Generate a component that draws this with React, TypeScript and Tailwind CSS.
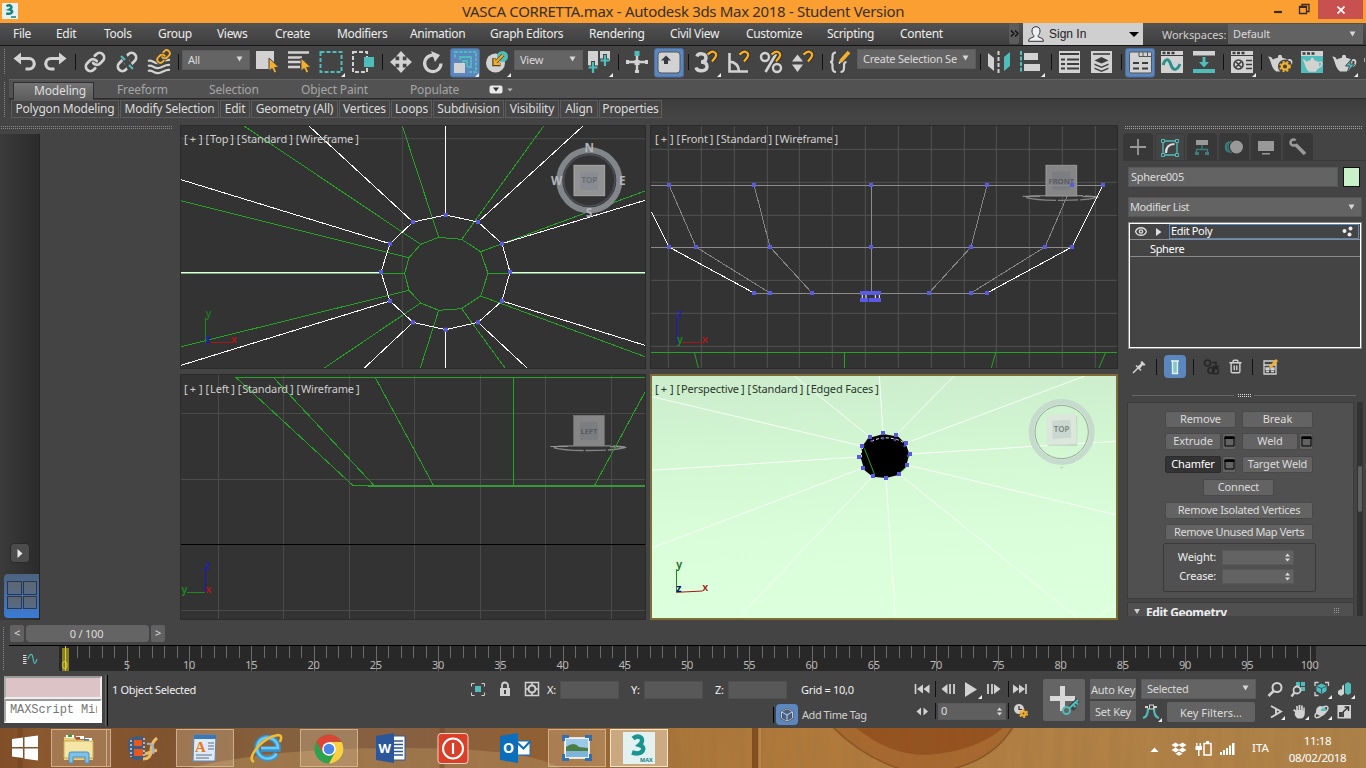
import React from "react";
import { Link, Trash2, Eye } from "lucide-react";

const L = "#d2d2d2";
const T = "#4fbdb9";
const O = "#f4b02c";
const BLUE = "#5b86be";

type Kids = { children?: React.ReactNode };

/* ---------- small building blocks ---------- */

function Slot({ children, flyout, active }: Kids & { flyout?: boolean; active?: boolean }) {
  return (
    <svg className="h-8 w-8 shrink-0" viewBox="0 0 32 32" fill="none">
      {active && <rect x="1.5" y="2.5" width="29" height="28.5" rx="2.5" fill={BLUE} stroke="#4a6f9f" />}
      {children}
      {flyout && <path d="M30 27v4h-4z" fill="#eee" />}
    </svg>
  );
}

function Sep() {
  return (
    <div className="flex h-8 w-1.5 shrink-0 items-center justify-center">
      <div className="h-4 w-px bg-[#111]" />
    </div>
  );
}

function Caret({ className = "" }: { className?: string }) {
  return (
    <svg className={"h-[6px] w-[7px] shrink-0 " + className} viewBox="0 0 7 6">
      <path d="M0.500 0.500h6L3.5 5.500z" fill="#d6d6d6" />
    </svg>
  );
}

function Drop({ label, className }: { label: string; className: string }) {
  return (
    <div className={"flex shrink-0 items-center justify-between border border-[#5b5b5b] bg-[#646464] pl-[5px] pr-[6px] text-[11px] tracking-[-0.25px] text-[#dadada] " + className}>
      <span>{label}</span>
      <Caret className="-mt-0.5" />
    </div>
  );
}

function Magnet({ x = 0, y = 0 }: { x?: number; y?: number }) {
  return (
    <g transform={`translate(${x} ${y})`}>
      <path d="M0 4L3.500 1.500C6.500 0 10 3.500 8 6.500L4.500 11" stroke="#3a3222" strokeWidth="4.200" />
      <path d="M0 4L3.500 1.500C6.500 0 10 3.500 8 6.500L4.500 11" stroke={O} strokeWidth="2.200" />
    </g>
  );
}

function Teapot() {
  return (
    <g>
      <path d="M4 10.500l3 .5 3.500 4.500-1 6C6.500 18.500 7 14 4 10.500z" fill={L} />
      <path d="M14 10.500a2 1.800 0 0 1 4 0v1.200c4 .6 6.500 2.300 6.500 4.800 0 4-2 7-4.500 9h-8c-2.500-2-4.500-5-4.500-9 0-2.500 2.500-4.200 6.500-4.800z" fill={L} />
      <path d="M23.500 14.500q4-1.500 4 1.500 0 3.500-5 5" stroke={L} strokeWidth="1.800" fill="none" />
    </g>
  );
}

function Gear({ cx, cy, r }: { cx: number; cy: number; r: number }) {
  return (
    <g>
      <circle cx={cx} cy={cy} r={r} fill="none" stroke={O} strokeWidth="2.200" />
      <circle cx={cx} cy={cy} r={r + 1.7} fill="none" stroke={O} strokeWidth="1.800" strokeDasharray="2 2" />
    </g>
  );
}

/* ---------- title and menus ---------- */

function TitleBar() {
  return (
    <div className="flex h-[23px] items-start bg-[#fb9f33]">
      <svg className="ml-[2px] mt-[3px] h-4 w-4" viewBox="0 0 16 16" fill="none">
        <rect width="16" height="16" fill="#e4f1f0" />
        <path d="M4.500 3.200c4-2.400 7 1.300 3 3.300 4.500.8 3 5.500-3.300 4" stroke="#14807f" strokeWidth="2.500" />
        <path d="M9 14h5" stroke="#14807f" strokeWidth="1.500" />
      </svg>
      <div className="ml-[444px] w-[445px] whitespace-nowrap text-[15px] leading-[23px] tracking-[-0.32px] text-[#38301f]">
        VASCA CORRETTA.max - Autodesk 3ds Max 2018 - Student Version
      </div>
      <svg className="ml-[365px] h-5 w-[46px]" viewBox="1272 0 46 20" fill="none">
        <path d="M1274 12h8" stroke="#3a2a14" strokeWidth="2.200" />
        <path d="M1299.500 6.500h7v7h-7zM1302 6V4.500h7v7h-2" stroke="#3a2a14" strokeWidth="1.300" />
        <path d="M1299 7h8" stroke="#3a2a14" strokeWidth="2" />
      </svg>
      <div className="flex h-[19px] w-[45px] items-center justify-center bg-[#c8504f]">
        <svg className="h-2 w-2" viewBox="0 0 8 8">
          <path d="M0.500 0.500l7 7M7.500 0.500l-7 7" stroke="#fff" strokeWidth="1.700" />
        </svg>
      </div>
    </div>
  );
}

const menus = [
  ["File", "w-[43px]"],
  ["Edit", "w-[48px]"],
  ["Tools", "w-[54px]"],
  ["Group", "w-[59px]"],
  ["Views", "w-[58px]"],
  ["Create", "w-[62px]"],
  ["Modifiers", "w-[73px]"],
  ["Animation", "w-[80px]"],
  ["Graph Editors", "w-[99px]"],
  ["Rendering", "w-[81px]"],
  ["Civil View", "w-[76px]"],
  ["Customize", "w-[81px]"],
  ["Scripting", "w-[73px]"],
  ["Content", "w-[109px]"],
];

function MenuBar() {
  return (
    <div className="flex h-[23px] items-start border-b border-[#151515] bg-linear-to-b from-[#525252] to-[#3e3e3e] pl-[13px] text-[12px] tracking-[-0.33px] text-[#ededed]">
      {menus.map(([m, w]) => (
        <span key={m} className={"shrink-0 leading-[21px] " + w}>{m}</span>
      ))}
      <div className="flex h-[21px] w-[10px] items-center justify-center rounded-xs bg-[#5c5c5c]">
        <svg className="h-[7px] w-[9px]" viewBox="0 0 9 7" fill="none" stroke="#111" strokeWidth="1.300">
          <path d="M1 .5l3 3-3 3M5 .5l3 3-3 3" />
        </svg>
      </div>
      <div className="ml-1 flex h-[22px] w-[120px] shrink-0 items-center bg-[#cfcfcf] pl-[5px] pr-1 font-['Liberation_Sans',sans-serif] text-[12px] tracking-normal text-[#222]">
        <svg className="h-4 w-4" viewBox="0 0 16 16">
          <path d="M8 .7c3 0 4 2 4 4.300 0 2-.8 3.700-1.800 4.500v1.300l4.500 2 .8 2.500H.5l.8-2.500 4.500-2V9.500C4.800 8.700 4 7 4 5 4 2.700 5 .7 8 .7z" fill="#eef0f5" stroke="#333" strokeWidth="1" />
        </svg>
        <span className="ml-[5px] flex-1">Sign In</span>
        <svg className="h-[5px] w-[10px]" viewBox="0 0 10 5"><path d="M0 0h10L5 5z" fill="#000" /></svg>
      </div>
      <span className="ml-[19px] w-[66px] shrink-0 text-[11px] leading-[23px] tracking-[-0.05px] text-[#d0d0d0]">Workspaces:</span>
      <div className="mt-px flex h-[20px] flex-1 items-center justify-between bg-[#626262] pl-[5px] pr-[7px] text-[11px] tracking-[-0.1px] text-[#dadada]">
        <span>Default</span>
        <Caret />
      </div>
      <div className="w-[3px]" />
    </div>
  );
}

/* ---------- main toolbar ---------- */

function Toolbar() {
  return (
    <div className="flex h-[33px] items-start overflow-hidden bg-[#444]">
      <div className="ml-[3px] mr-[2px] mt-[3px] h-[26px] w-[3px] bg-[conic-gradient(#8a8a8a_25%,transparent_0)] bg-[length:2px_2px]" />
      <Slot>
        <path d="M12 12.500H21a5 5 0 0 1 0 10.500H17.500" stroke={L} strokeWidth="3.200" />
        <path d="M5.500 12.500L13 6.500v12z" fill={L} />
      </Slot>
      <Slot>
        <path d="M20 12.500H11a5 5 0 0 0 0 10.500H14.500" stroke={L} strokeWidth="3.200" />
        <path d="M26.500 12.500L19 6.500v12z" fill={L} />
      </Slot>
      <Sep />
      <div className="w-px" />
      <Slot>
        <Link x={5} y={5} width={22} height={22} color={L} strokeWidth={3} />
      </Slot>
      <Slot>
        <Link x={5} y={5} width={22} height={22} color={L} strokeWidth={3} />
        <path d="M11 7L21 25" stroke="#444" strokeWidth="6" />
        <path d="M10 10l4 4M18 19l4 4" stroke={T} strokeWidth="2.200" />
      </Slot>
      <Slot>
        <path d="M5 15c4-2 6 3 11 2 4-1 7-4 11-3M5 20c4-2 6 3 11 2 4-1 7-4 11-3M5 25c4-2 6 3 11 2 4-1 7-4 11-3" stroke={L} strokeWidth="2.200" />
        <Link x={13} y={3} width={15} height={15} color="#444" strokeWidth={6} />
        <Link x={13} y={3} width={15} height={15} color={O} strokeWidth={3} />
      </Slot>
      <Sep />
      <div className="w-px" />
      <Drop label="All" className="mt-[4px] h-[20px] w-[68px]" />
      <Slot>
        <rect x="6" y="5" width="18" height="18" fill={L} />
        <path d="M19 12v13l3.200-2.500 2 4.500 2.500-1-2-4.500 4-.5z" fill={O} stroke="#444" />
      </Slot>
      <Slot>
        <path d="M6 6.500h21M6 11.500h14M6 16h17M6 21h12" stroke={L} strokeWidth="2.400" />
        <path d="M19 12v13l3.200-2.500 2 4.500 2.500-1-2-4.500 4-.5z" fill={O} stroke="#444" />
      </Slot>
      <div className="w-px" />
      <Slot flyout>
        <rect x="5.500" y="6" width="21" height="20" stroke={T} strokeWidth="2" strokeDasharray="4 2" />
      </Slot>
      <Slot>
        <rect x="6" y="6" width="14" height="20" stroke={L} strokeWidth="2" strokeDasharray="4 2" />
        <rect x="17" y="11" width="10" height="10" fill={T} />
      </Slot>
      <Sep />
      <Slot>
        <path d="M8 16H24M16 8V24" stroke={L} strokeWidth="3.600" />
        <path d="M16 5l5 5.500h-10zM16 27l5-5.500h-10zM5 16l5.500-5v10zM27 16l-5.500-5v10z" fill={L} />
      </Slot>
      <Slot>
        <path d="M19 9.800A8.200 8.200 0 1 0 24 17.500" stroke={L} strokeWidth="3.200" />
        <path d="M14 5l9 4-5 7z" fill={L} />
      </Slot>
      <Slot active>
        <rect x="6" y="6" width="21" height="20" stroke={T} strokeWidth="2" strokeDasharray="3 1.500" />
        <rect x="5" y="13" width="15" height="14" fill={BLUE} />
        <path d="M11 14v-3h11v10h-3M14 17v-2h4v6" stroke={T} strokeWidth="1.800" />
        <rect x="5" y="17" width="11" height="10" fill={L} />
        <path d="M30 27v4h-4z" fill="#eee" />
      </Slot>
      <Slot flyout>
        <circle cx="14.500" cy="17" r="9.500" fill={L} />
        <circle cx="21.500" cy="10.500" r="5.500" fill={T} />
        <path d="M22 9l-8 8M13 12v6.500h6.500" stroke="#5a4315" strokeWidth="3.500" />
        <path d="M22 9l-8 8M13.500 12.500v5.500h5.500" stroke={O} strokeWidth="2" />
      </Slot>
      <div className="w-px" />
      <Drop label="View" className="mt-[4px] h-[20px] w-[69px]" />
      <Slot flyout>
        <path d="M5 5h10v14l-5 4-5-4zM17 5h10v9l-5 4-5-4z" fill={L} />
        <path d="M10 15v13M5 21.500h9M22 8v13M17 14.500h9" stroke="#444" strokeWidth="4" />
        <path d="M10 16v11M5.500 21.500h9M22 9v11M17.500 14.500h9" stroke={T} strokeWidth="2.200" />
      </Slot>
      <Sep />
      <Slot>
        <path d="M16 9v18M5 16h22" stroke={L} strokeWidth="2.400" />
        <rect x="13.500" y="5" width="5" height="5" fill={T} />
        <path d="M13.500 14h5v5h-5zM5 14h3v4H5zM24 14h3v4h-3zM14 24h4v3h-4z" fill={L} />
      </Slot>
      <Slot active>
        <rect x="5" y="6" width="22" height="21" rx="3" fill={L} stroke="#555" />
        <path d="M13 9.500l5 5h-3v3.500h-4v-3.500H8z" fill="#3a3a3a" />
      </Slot>
      <Sep />
      <Slot flyout>
        <path d="M6 10.500C7 6.500 15.500 7 15 12c-.3 3-2.500 4-5 4 3 0 6 1 6 4.500 0 5-9.500 6-11 1" stroke={L} strokeWidth="3.400" />
        <Magnet x={16.500} y={4.500} />
      </Slot>
      <Slot>
        <path d="M6.500 7V25.500H25M6.500 15.500q9 1 9.500 10" stroke={L} strokeWidth="2.600" />
        <Magnet x={16.500} y={4.500} />
      </Slot>
      <Slot>
        <circle cx="10" cy="11" r="4" stroke={L} strokeWidth="2.400" />
        <circle cx="22" cy="22" r="4" stroke={L} strokeWidth="2.400" />
        <path d="M21 8L10.500 26" stroke={L} strokeWidth="2.600" />
        <Magnet x={16.500} y={4.500} />
      </Slot>
      <Slot>
        <path d="M5 15.500L10.500 8.500l5.500 7zM5 18.500L10.500 26l5.500-7.500z" fill={L} />
        <Magnet x={16.500} y={4.500} />
      </Slot>
      <Sep />
      <Slot>
        <path d="M11 6.500q-3.500 0-3.500 4v2.500q0 3-2.500 3 2.500 0 2.500 3V22q0 4 3.500 4M15.500 26q3.500 0 3.500-4v-3q0-3 2.500-3" stroke={L} strokeWidth="2.200" />
        <path d="M24 6L15.500 15.500" stroke={O} strokeWidth="3.600" />
        <path d="M15.500 15.500l-1.500 2" stroke="#eee" strokeWidth="1.500" />
      </Slot>
      <Drop label="Create Selection Se" className="mt-[3px] h-[20px] w-[119px]" />
      <div className="w-px" />
      <Sep />
      <Slot>
        <path d="M5 7l6 5v13l-6-5z" fill={L} />
        <path d="M15.500 5v22" stroke={L} strokeWidth="2" strokeDasharray="4 2" />
        <path d="M27 6l-6 5v14l6-5z" fill={T} />
      </Slot>
      <Slot flyout>
        <path d="M6 5v22" stroke={T} strokeWidth="2" strokeDasharray="4 1.500" />
        <path d="M9 7h14v7H9zM9 18h16v7H9z" fill={L} />
      </Slot>
      <div className="w-px" />
      <Sep />
      <Slot>
        <rect x="5" y="5" width="21" height="22" fill={L} />
        <path d="M6 8h19M7 13.500h4M13 13.500h12M7 18h4M13 18h12M7 22.500h4M13 22.500h12" stroke="#3c3c3c" strokeWidth="2" />
      </Slot>
      <Slot>
        <rect x="5" y="5" width="21" height="22" fill={L} />
        <path d="M7 8h17" stroke="#3c3c3c" strokeWidth="1.600" />
        <path d="M15.500 11l7 3.500-7 3-7-3zM8.500 17.500l7 3 7-3v1.500l-7 3-7-3zM8.500 21.500l7 3 7-3v1.500l-7 3-7-3z" fill="#3c3c3c" />
      </Slot>
      <Sep />
      <Slot active>
        <rect x="5.500" y="6" width="22" height="21" rx="1.500" fill={L} stroke="#555" />
        <path d="M15 6v4.500h12.500M19 6v4.500M23.500 6v4.500" stroke="#555" />
        <path d="M9 17h6M18 17h6M9 22.500h6M18 22.500h6" stroke="#3c3c3c" strokeWidth="2.200" />
      </Slot>
      <Slot>
        <rect x="5" y="5" width="22" height="22" fill={L} />
        <path d="M5 9.500h22" stroke="#3c3c3c" />
        <path d="M6.500 7h3M11 7h3M15.500 7h3" stroke="#3c3c3c" strokeWidth="2.500" />
        <path d="M7 19c3-8 6-6 8 0s6 6 9-1" stroke="#2c8f8c" strokeWidth="3" />
      </Slot>
      <Slot>
        <path d="M5 5h22v4.500H5z" fill={L} />
        <path d="M5 23h22v4H5z" fill={T} />
        <path d="M14.500 11h3v5h3.500l-5 5.500-5-5.500h3.500z" fill={T} />
      </Slot>
      <Sep />
      <Slot flyout>
        <rect x="5" y="5" width="22" height="22" fill={L} />
        <path d="M5 9.500h22" stroke="#3c3c3c" />
        <path d="M6.500 7h3M11 7h3M15.500 7h3" stroke="#3c3c3c" strokeWidth="2.500" />
        <circle cx="12.500" cy="18.500" r="4.500" stroke="#3c3c3c" strokeWidth="1.600" />
        <path d="M9.500 15.500l6 6M15.500 15.500l-6 6M20 14.500h6M20 18.500h6M20 22.500h6" stroke="#3c3c3c" strokeWidth="1.600" />
      </Slot>
      <Sep />
      <Slot>
        <Teapot />
        <circle cx="21" cy="20.500" r="7" fill="#444" />
        <Gear cx={21} cy={20.500} r={3.200} />
      </Slot>
      <Slot>
        <rect x="5" y="5" width="22" height="22" fill={T} />
        <rect x="5" y="5" width="22" height="5" fill={L} />
        <path d="M6.500 7.500h3M11 7.500h3M15.500 7.500h3" stroke="#3c3c3c" strokeWidth="2.500" />
        <g transform="translate(3 4.500) scale(.83)"><Teapot /></g>
      </Slot>
      <Slot flyout>
        <Teapot />
        <path d="M24 12.500l-6.500 7.500h4l-2.500 7 7.500-9h-4.500z" fill={T} stroke="#444" />
      </Slot>
      <div className="ml-[4px] mt-3 h-1 w-px bg-[#aaa]" />
    </div>
  );
}

/* ---------- ribbon ---------- */

const panels = [
  ["Polygon Modeling", "w-[108px]"],
  ["Modify Selection", "w-[99px]"],
  ["Edit", "w-[30px]"],
  ["Geometry (All)", "w-[87px]"],
  ["Vertices", "w-[51px]"],
  ["Loops", "w-[41px]"],
  ["Subdivision", "w-[71px]"],
  ["Visibility", "w-[54px]"],
  ["Align", "w-[38px]"],
  ["Properties", "w-[63px]"],
];

function Ribbon() {
  return (
    <div className="flex h-[40px] bg-[#444] pl-[3px]">
      <div className="mt-[3px] h-[36px] w-[3px] bg-[conic-gradient(#8a8a8a_25%,transparent_0)] bg-[length:2px_2px]" />
      <div className="ml-[3px] flex-1">
        <div className="flex h-[20px] items-start border-b border-t border-b-[#2c2c2c] border-t-[#636363] bg-[#525252] pl-1 text-[12px] leading-[20px] tracking-[-0.15px] text-[#a5a5a5]">
          <div className="mt-[2px] h-[18px] w-[81px] border-x border-t border-[#2e2e2e] bg-linear-to-b from-[#747474] to-[#5c5c5c] pl-5 leading-[15px] text-[#dedede]">Modeling</div>
          <span className="ml-[23px] w-[92px]">Freeform</span>
          <span className="w-[92px]">Selection</span>
          <span className="w-[109px]">Object Paint</span>
          <span className="w-[79px]">Populate</span>
          <svg className="mt-[5px] h-[9px] w-[24px]" viewBox="0 0 24 9">
            <rect x="0.500" y="0.500" width="13" height="8" rx="2" fill="#e8e8e8" />
            <path d="M4 2.500h6L7 6.500z" fill="#333" />
            <path d="M18.500 3.500h5l-2.500 3z" fill="#bbb" />
          </svg>
        </div>
        <div className="flex h-[20px] items-start gap-px bg-linear-to-b from-[#3c3c3c] to-[#464646] pl-0.5 pt-px text-[12px] text-[#dcdcdc]">
          {panels.map(([p, w]) => (
            <div key={p} className={"flex h-[18px] shrink-0 justify-center whitespace-nowrap border border-[#5c5c5c] bg-[#454545] leading-[16px] tracking-[-0.2px] " + w}>{p}</div>
          ))}
        </div>
      </div>
    </div>
  );
}

/* ---------- viewports ---------- */

function Label({ parts, className }: { parts: string[]; className: string }) {
  return (
    <div className={"absolute left-[3px] flex gap-[3px] whitespace-nowrap text-[11px] leading-4 " + className}>
      <span>
        [<span className="ml-[2px] mr-[3px]">+</span>]
      </span>
      {parts.map((p) => (
        <span key={p} className="tracking-[-0.15px]">
          [<span className="ml-px mr-[2px]">{p}</span>]
        </span>
      ))}
    </div>
  );
}

function Dots({ pts, s = 12, fill = "#5a5ae0" }: { pts: number[][]; s?: number; fill?: string }) {
  return (
    <g fill={fill}>
      {pts.map(([x, y]) => (
        <rect key={x + "," + y} x={x - s / 2} y={y - s / 2} width={s} height={s} />
      ))}
    </g>
  );
}

const ring = [
  [797, 270], [894, 291], [966, 356], [990, 441], [966, 528], [894, 592],
  [797, 614], [699, 592], [630, 528], [603, 441], [630, 356], [699, 291],
];
const rays = [[797, 3], [1209, 3], [1395, 226], [1395, 441], [1395, 661], [1041, 729], [797, 729], [553, 729], [3, 721], [3, 441], [3, 164], [387, 3]];
const innerRing = [
  [776, 337], [845, 343], [902, 380], [924, 445], [902, 513], [845, 551],
  [776, 556], [722, 534], [687, 496], [674, 445], [687, 398], [722, 358],
];
const innerRays = [[667, 3], [1091, 3], [1395, 198], [1395, 445], [1395, 695], [975, 729], [721, 729], [433, 729], [3, 665], [3, 445], [3, 227], [192, 3]];

function TopView() {
  return (
    <div className="relative h-[244px] w-[466px] border border-[#2b2b2b] bg-[#333]">
      <svg className="h-[242px] w-[464px]" viewBox="3 3 1392 726" fill="none" strokeWidth="3">
        <path d="M667 3V729M3 41H1395" stroke="#4b4b4b" />
        <g stroke="#25a325" shapeRendering="crispEdges">
          <polygon points={innerRing.join(" ")} />
          {innerRing.map((p, i) => <path key={i} d={`M${p}L${innerRays[i]}`} />)}
        </g>
        <path d="M3 443.500H603M990 443.500H1395" stroke="#bfe8bf" />
        <g stroke="#fff" shapeRendering="crispEdges">
          <polygon points={ring.join(" ")} />
          {ring.map((p, i) => <path key={i} d={`M${p}L${rays[i]}`} />)}
        </g>
        <Dots pts={ring} />
        <circle cx="1228" cy="166" r="90" stroke="#8b8e93" strokeWidth="18" opacity=".9" />
        <circle cx="1228" cy="166" r="77" stroke="#4a4d53" strokeWidth="5" />
        <rect x="1182" y="121" width="92" height="91" fill="#939393" stroke="#a8a8a8" />
        <rect x="1201" y="140" width="54" height="54" fill="#898c92" />
        <g fontFamily="Noto Sans, sans-serif" fontWeight="700" textAnchor="middle">
          <text x="1228" y="175" fontSize="24" fontWeight="600" fill="#666a70">TOP</text>
          <g fontSize="35" fill="#b4b6b9">
            <text x="1228" y="81">N</text>
            <text x="1228" y="277">S</text>
            <text x="1130" y="180">W</text>
            <text x="1327" y="180">E</text>
          </g>
        </g>
        <path d="M76.500 578V654" stroke="#1b8c1b" />
        <path d="M80 652.500H158" stroke="#a01818" />
        <g fontFamily="Noto Sans, sans-serif" fontSize="32">
          <text x="77" y="577" fill="#1b8c1b">y</text>
          <text x="152" y="653" fill="#b01818" fontWeight="600">x</text>
          <text x="76" y="654" fill="#1818c8" fontWeight="700">z</text>
        </g>
      </svg>
      <Label className="top-[5px] text-[#cfcfcf]" parts={["Top", "Standard", "Wireframe"]} />
    </div>
  );
}

function CubeRing({ cx, cy, label }: { cx: number; cy: number; label: string }) {
  return (
    <g>
      <path d={`M${cx - 46} ${cy + 46}Q${cx - 100} ${cy + 46} ${cx - 108} ${cy + 51}Q${cx - 80} ${cy + 60} ${cx} ${cy + 60}T${cx + 108} ${cy + 51}Q${cx + 90} ${cy + 46} ${cx + 46} ${cy + 46}`} stroke="#858585" strokeWidth="4" strokeDasharray="60 6 90 5" />
      <path d={`M${cx - 116} ${cy + 48}h52M${cx + 64} ${cy + 49}h44`} stroke="#999" strokeWidth="3" />
      <rect x={cx - 46} y={cy - 45} width="92" height="92" fill="#868686" stroke="#9a9a9a" />
      <rect x={cx - 27} y={cy - 26} width="54" height="54" fill="#7c7d80" />
      <text x={cx} y={cy + 10} fontSize="23" fontWeight="600" textAnchor="middle" fontFamily="Noto Sans, sans-serif" fill="#55575b">{label}</text>
    </g>
  );
}

const frontPts = [
  [57, 180], [312, 180], [663, 180], [1011, 180], [1266, 180], [1359, 180],
  [57, 366], [138, 366], [360, 366], [663, 366], [963, 366], [1185, 366], [1266, 366],
  [312, 504], [360, 504], [486, 504], [837, 504], [963, 504], [1011, 504],
];

function FrontView() {
  return (
    <div className="relative h-[244px] w-[468px] border border-[#2b2b2b] bg-[#333]">
      <svg className="h-[242px] w-[466px]" viewBox="3 3 1398 726" fill="none" strokeWidth="3">
        <path d="M55 3V729M154 3V729M253 3V729M352 3V729M448 3V729M547 3V729M646 3V729M745 3V729M844 3V729M943 3V729M1039 3V729M1138 3V729M1237 3V729M1336 3V729M3 73H1401M3 172H1401M3 271H1401M3 466H1401M3 565H1401M3 664H1401" stroke="#525252" />
        <path d="M3 682.500H1401M133 682L145 729M583.500 682V729M1037 682L1024 729M1367 682L1347 729" stroke="#25a325" />
        <CubeRing cx={1234} cy={166} label="FRONT" />
        <path d="M3 181.500H1359M3 367.500H1266M312 505.500H1011M664.500 181V505" stroke="#8c8c8c" />
        <path d="M57 180L138 366 360 504M312 180L360 366 486 504M1011 180L963 366 837 504M1266 180L1185 366 963 504" stroke="#858585" shapeRendering="crispEdges" />
        <path d="M5 262L57 366 312 504M1359 180L1266 366 1011 504" stroke="#fff" shapeRendering="crispEdges" />
        <path d="M637 500V528M688 500V528M676 500V528M648 500V528" stroke="#fff" />
        <Dots pts={frontPts} />
        <path d="M630 498H693V510H630zM630 519H654V531H630zM656 519H693V531H656z" fill="#5a5ae8" />
        <path d="M79.500 578V654" stroke="#1818c8" />
        <path d="M95 652.500H158" stroke="#a01818" />
        <g fontFamily="Noto Sans, sans-serif" fontSize="32" fontWeight="600">
          <text x="80" y="577" fill="#1c1cd8">z</text>
          <text x="81" y="653" fill="#1b8c1b">y</text>
          <text x="155" y="653" fill="#b01818">x</text>
        </g>
      </svg>
      <Label className="top-[5px] ml-px text-[#cfcfcf]" parts={["Front", "Standard", "Wireframe"]} />
    </div>
  );
}

function LeftView() {
  return (
    <div className="relative h-[246px] w-[466px] border border-[#2b2b2b] bg-[#333]">
      <svg className="h-[244px] w-[464px]" viewBox="181 375 464 244" fill="none">
        <path d="M218.500 375V619M283.500 375V619M349.500 375V619M414.500 375V619M480.500 375V619M545.500 375V619M611.500 375V619M181 413.500H645M181 479.500H645M181 610.500H645" stroke="#4b4b4b" />
        <path d="M181 544.500H645" stroke="#000" />
        <path d="M235.500 377.500H645M513.500 377V485" stroke="#25a325" />
        <path d="M235.500 377L353 485.500H374L273 377M375 377L433.500 485.500" stroke="#25a325" shapeRendering="crispEdges" />
        <path d="M368 486H645" stroke="#3a963a" strokeWidth="2" />
        <g transform="translate(589 430.500) scale(.3333)"><CubeRing cx={0} cy={0} label="LEFT" /></g>
        <path d="M645 392L594.500 485.500" stroke="#25a325" shapeRendering="crispEdges" />
        <path d="M205.500 567V593" stroke="#1818c8" />
        <path d="M187 592.500H205" stroke="#1b8c1b" />
        <g fontFamily="Noto Sans, sans-serif" fontSize="10.500" fontWeight="600">
          <text x="205" y="569" fill="#1c1cd8">z</text>
          <text x="181.500" y="593" fill="#1b8c1b">y</text>
          <text x="205.500" y="593" fill="#b01818">x</text>
        </g>
      </svg>
      <Label className="top-[6px] text-[#cfcfcf]" parts={["Left", "Standard", "Wireframe"]} />
    </div>
  );
}

const hole = [
  [699, 189], [738, 195], [768, 219], [780, 252], [771, 285], [747, 312],
  [708, 324], [669, 318], [639, 294], [627, 261], [636, 228], [660, 201],
];
const holeRays = [[688, 18], [912, 18], [1305, 18], [1398, 214], [1398, 434], [1282, 743], [736, 743], [265, 743], [5, 534], [5, 301], [5, 80], [433, 18]];

function PerspectiveView() {
  return (
    <div className="relative h-[246px] w-[468px] border-2 border-[#7d6d35] bg-[#d9fcd9]">
      <svg className="h-[242px] w-[464px]" viewBox="6 18 1392 726" fill="none" strokeWidth="3">
        <defs>
          <linearGradient id="shade" x1="0" y1="0" x2="0.060" y2="1">
            <stop offset="0" stopColor="#cbedcb" />
            <stop offset="0.350" stopColor="#d3f6d3" />
            <stop offset="0.700" stopColor="#dafdda" />
            <stop offset="1" stopColor="#dcffdc" />
          </linearGradient>
        </defs>
        <rect x="6" y="18" width="1392" height="726" fill="url(#shade)" />
        <g stroke="#f8fff8">
          {hole.map((p, i) => <path key={i} d={`M${p}L${holeRays[i]}`} />)}
          <path d="M1340 743L1398 704" />
        </g>
        <path d="M654 205L700 192 745 200 768 222 778 252 768 290 742 316 708 324 668 320 643 300 632 262 636 230z" fill="#000" />
        <path d="M664 214Q700 196 742 209T776 262" stroke="#fff" strokeDasharray="9 6" />
        <path d="M643 235L673 312M769 290L756 304" stroke="#25a325" />
        <path d="M634 262V240L645 226" stroke="#fff" strokeDasharray="8 5" />
        <Dots pts={hole} />
        <Dots pts={[[665, 213], [699, 205], [735, 210], [764, 228], [774, 258]]} s={7} fill="#4a4ab0" />
        <circle cx="1235" cy="186" r="91" stroke="#c6dbcd" strokeWidth="16" />
        <path d="M1228 290h14l-7 8z" fill="#c6dbcd" />
        <circle cx="1235" cy="186" r="80" stroke="#94a899" strokeWidth="3" />
        <rect x="1192" y="138" width="90" height="90" rx="4" fill="#b9cdbd" opacity=".7" />
        <path d="M1188 136L1278 131 1281 221 1191 225z" fill="#dbe7db" />
        <path d="M1206 152L1261 149 1264 203 1208 207z" fill="#cad8d2" />
        <text x="1235" y="187" fontSize="24" textAnchor="middle" fontFamily="Noto Sans, sans-serif" fontWeight="600" fill="#7b8781">TOP</text>
        <path d="M79.500 598V668" stroke="#1b8c1b" />
        <path d="M80 667L158 663" stroke="#a01818" />
        <g fontFamily="Noto Sans, sans-serif" fontSize="32" fontWeight="600">
          <text x="79" y="594" fill="#206a20">y</text>
          <text x="157" y="664" fill="#a02020">x</text>
          <text x="79" y="666" fill="#10106a" fontWeight="700">z</text>
        </g>
      </svg>
      <Label className="top-[5px] text-[#2c352c]" parts={["Perspective", "Standard", "Edged Faces"]} />
    </div>
  );
}

/* ---------- left strip ---------- */

function LeftStrip() {
  return (
    <div className="flex h-full w-[180px] flex-col">
      <div className="mt-[1px] h-[4px] w-[172px] bg-[conic-gradient(#8a8a8a_25%,transparent_0)] bg-[length:2px_2px]" />
      <div className="mt-[4px] flex h-[486px] w-[40px] flex-col items-start border-r border-[#242424] bg-linear-to-r from-[#3b3b3b] via-[#333] to-[#2b2b2b]">
        <div className="ml-[10px] mt-[409px] flex h-[20px] w-[20px] items-center justify-center rounded-sm border border-[#2a2a2a] bg-[#4c4c4c]">
          <svg className="h-[9px] w-[6px]" viewBox="0 0 6 9"><path d="M0.500 0l5 4.500L0.500 9z" fill="#e8e8e8" /></svg>
        </div>
        <div className="ml-[4px] mt-[11px] grid h-[44px] w-[35px] grid-cols-2 grid-rows-2 gap-px rounded-l-sm bg-linear-to-b from-[#4d637e] to-[#3a7bd5] pb-[9px] pl-[3px] pr-[2px] pt-[7px]">
          {[0, 1, 2, 3].map((i) => (
            <div key={i} className="border border-[#263850] bg-linear-to-b from-[#5e6772] to-[#566a86]" />
          ))}
        </div>
      </div>
    </div>
  );
}

/* ---------- command panel ---------- */

function Btn({ children, className = "", dark }: Kids & { className?: string; dark?: boolean }) {
  return (
    <div className={"flex h-[17px] shrink-0 items-center justify-center overflow-hidden whitespace-nowrap rounded-xs border text-[11px] " + (dark ? "border-[#2c2c2c] bg-[#333] text-[#fff] " : "border-[#494949] bg-[#636363] text-[#dcdcdc] ") + className}>
      {children}
    </div>
  );
}

function Settings() {
  return (
    <Btn className="w-[14px]">
      <svg className="h-[11px] w-[11px] shrink-0" viewBox="0 0 11 11">
        <path d="M1 1h9v9H1z" fill="none" stroke="#000" />
        <path d="M.5.5h10V3H.5z" fill="#000" />
      </svg>
    </Btn>
  );
}

function Spin() {
  return (
    <svg className="h-[9px] w-[5px] shrink-0" viewBox="0 0 5 9"><path d="M0 3.500h5L2.500.5zM0 5.500h5L2.500 8.500z" fill="#ddd" /></svg>
  );
}

function PanelTab({ children, active }: Kids & { active?: boolean }) {
  return (
    <div className={"flex h-[28px] w-[30px] items-center justify-center rounded-t-sm " + (active ? "border-x border-t border-[#3a3a3a] bg-[#444]" : "border-b border-[#333] bg-[#383838]")}>
      <svg className="h-5 w-5" viewBox="0 0 20 20" fill="none">{children}</svg>
    </div>
  );
}

function CommandPanel() {
  return (
    <div className="flex w-[248px] flex-col bg-[#444] pl-[5px]">
      <div className="ml-px mt-px h-[4px] w-[239px] bg-[conic-gradient(#a0a0a0_25%,transparent_0)] bg-[length:2px_2px]" />
      <div className="mt-[3px] flex gap-[2px]">
        <PanelTab><path d="M10 2v16M2 10h16" stroke="#999" strokeWidth="1.800" /></PanelTab>
        <PanelTab active>
          <path d="M3 3h14v14H3z" stroke={T} strokeWidth="1.300" />
          <path d="M1.500 1.500h3v3h-3zM15.500 1.500h3v3h-3zM1.500 15.500h3v3h-3zM15.500 15.500h3v3h-3z" fill="#444" stroke={T} />
          <path d="M6 15Q6 6 14.500 6" stroke="#ddd" strokeWidth="2.200" />
        </PanelTab>
        <PanelTab>
          <path d="M4 3h12v5H4z" fill="#999" />
          <path d="M10 8v5M4.500 16v-3.500h11V16" stroke="#39807c" strokeWidth="1.300" />
          <path d="M3 15h4v3H3zM13 15h4v3h-4z" fill="#39807c" />
        </PanelTab>
        <PanelTab>
          <circle cx="12.500" cy="10" r="6.500" fill="#999" />
          <path d="M7.500 4a7 7 0 0 0 0 12M5 4.500a7 7 0 0 0 0 11M3 5.500a7 7 0 0 0 0 9" stroke="#39807c" strokeWidth="1.200" />
        </PanelTab>
        <PanelTab><path d="M2 4h16v10H2zM6 16h8v1.500H6z" fill="#999" /></PanelTab>
        <PanelTab>
          <circle cx="5.500" cy="5.500" r="3" stroke="#999" strokeWidth="2.500" strokeDasharray="14 5" strokeDashoffset="-2" />
          <path d="M7.500 7.500L17 17" stroke="#999" strokeWidth="3.500" />
        </PanelTab>
      </div>
      <div className="-mt-px h-px bg-[#393939]" />
      <div className="ml-[5px] mt-[6px] flex items-center">
        <div className="h-[20px] w-[210px] border border-[#565656] bg-[#636363] pl-[2px] text-[11px] leading-[17px] tracking-[-0.25px] text-[#dcdcdc]">Sphere005</div>
        <div className="ml-[5px] h-[20px] w-[17px] border border-[#111] bg-[#c9f0c9]" />
      </div>
      <div className="ml-[5px] mt-[10px] flex h-[20px] w-[234px] items-center justify-between border border-[#565656] bg-[#636363] pl-px pr-[6px] text-[11px] tracking-[-0.4px] text-[#dcdcdc]">
        <span>Modifier List</span>
        <Caret />
      </div>
      <div className="ml-[5px] mt-[5px] h-[127px] w-[234px] border border-[#8a8a8a] bg-[#444] text-[11px] tracking-[-0.35px] text-white">
        <div className="h-full border border-white">
          <div className="flex h-[16px] items-center border-b border-[#8a8a8a] pl-[4px]">
            <Eye className="h-[13px] w-[14px] text-[#ddd]" strokeWidth={2.500} />
            <svg className="ml-[8px] h-[8px] w-[6px]" viewBox="0 0 6 8"><path d="M0 0l5.500 4L0 8z" fill="#ddd" /></svg>
            <div className="ml-[7px] flex h-[15px] w-[190px] items-center justify-between border border-[#5b86be] pl-px pr-[5px]">
              <span>Edit Poly</span>
              <svg className="h-[11px] w-[11px]" viewBox="0 0 11 11" fill="#eee"><circle cx="2.500" cy="5" r="2" /><circle cx="8.500" cy="2.500" r="2" /><circle cx="7.500" cy="8.500" r="2" /></svg>
            </div>
          </div>
          <div className="h-[17px] border-b border-[#8a8a8a] pl-[20px] leading-[17px]">Sphere</div>
        </div>
      </div>
      <div className="ml-[5px] mt-[6px] flex h-[23px] items-center">
        <svg className="ml-[3px] h-4 w-4" viewBox="0 0 16 16"><path d="M2 14l5-5M5 6.500l5 5" stroke={L} strokeWidth="1.500" /><path d="M6 8L10 4.500 9.500 3 11 2l3.500 3.500-1.200 1.200-1.500-.5L8.500 10z" fill={L} /></svg>
        <div className="ml-[9px] h-4 w-px bg-[#111]" />
        <div className="ml-[7px] flex h-[23px] w-[22px] items-center justify-center rounded-sm bg-[#5b86be]">
          <svg className="h-4 w-3" viewBox="0 0 12 16"><path d="M2 2h8M3.500 2v12.500h5V2" fill="#7fc9c9" stroke="#e8f4f4" strokeWidth="1.300" /></svg>
        </div>
        <div className="ml-[7px] h-4 w-px bg-[#111]" />
        <svg className="ml-[9px] h-4 w-[17px]" viewBox="0 0 17 16" fill="none" stroke="#262626" strokeWidth="1.600"><circle cx="4.500" cy="4" r="3" /><circle cx="8" cy="11.500" r="3" /><circle cx="12.500" cy="12" r="3" /><path d="M9 3.500h4v5M10 6.500l3 3 3-3" /></svg>
        <Trash2 className="ml-[8px] h-[15px] w-[15px] text-[#d2d2d2]" strokeWidth={2.200} />
        <div className="ml-[9px] h-4 w-px bg-[#111]" />
        <svg className="ml-[10px] h-4 w-[15px]" viewBox="0 0 15 16" fill="none"><path d="M1 2h12v13H1zM1 6h12M3 9h3v1.500H3zM8 9h3v1.500H8zM3 12.500h3M8 12.500h3" stroke={L} strokeWidth="1.300" /><path d="M14 1L7 8.500" stroke={O} strokeWidth="2.800" /></svg>
      </div>
      <div className="ml-[9px] mt-[13px] flex h-[8px] w-[224px] items-center gap-[3px]">
        <div className="h-px flex-1 bg-[#666]" />
        <div className="h-[3px] w-[14px] bg-[conic-gradient(#ddd_25%,transparent_0)] bg-[length:2px_2px]" />
        <div className="h-px flex-1 bg-[#666]" />
      </div>
      <div className="ml-[4px] mt-[3px] flex gap-[3px]">
        <div className="flex h-[214px] w-[227px] flex-col overflow-hidden text-[11px]">
          <div className="flex h-[197px] shrink-0 flex-col border border-[#3c3c3c] bg-[#505050] pl-[37px] pt-[8px]">
            <div className="flex gap-[6px]"><Btn className="w-[71px] tracking-[-0.1px]">Remove</Btn><Btn className="w-[71px]">Break</Btn></div>
            <div className="mt-[5px] flex"><Btn className="w-[56px] tracking-[-0.1px]">Extrude</Btn><div className="w-px" /><Settings /><div className="w-[6px]" /><Btn className="w-[56px] tracking-[-0.1px]">Weld</Btn><div className="w-px" /><Settings /></div>
            <div className="mt-[6px] flex"><Btn dark className="w-[56px] tracking-[-0.2px]">Chamfer</Btn><div className="w-px" /><Settings /><div className="w-[6px]" /><Btn className="w-[71px] tracking-[-0.2px]">Target Weld</Btn></div>
            <Btn className="ml-[38px] mt-[6px] w-[71px] tracking-[-0.2px]">Connect</Btn>
            <Btn className="mt-[6px] w-[148px] tracking-[-0.3px]">Remove Isolated Vertices</Btn>
            <div className="mt-[5px] h-[15px] overflow-hidden"><Btn className="w-[148px] tracking-[-0.4px]">Remove Unused Map Verts</Btn></div>
            <div className="-ml-[2px] mt-[4px] flex h-[49px] w-[153px] flex-col gap-[4px] rounded-xs border border-[#393939] pt-[6px] text-[#eee]">
              {["Weight:", "Crease:"].map((n) => (
                <div key={n} className="flex h-[15px] items-center">
                  <span className="w-[52px] text-right tracking-[-0.2px]">{n}</span>
                  <div className="ml-[6px] flex h-[15px] w-[72px] items-center justify-end border border-[#585858] bg-[#636363] pr-[3px]"><Spin /></div>
                </div>
              ))}
            </div>
          </div>
          <div className="mt-[3px] flex h-[25px] shrink-0 items-start border border-[#3c3c3c] bg-[#505050] pl-[6px] text-[12px] font-bold text-[#eee]">
            <svg className="mt-[6px] h-[5px] w-[6px]" viewBox="0 0 6 5"><path d="M0 0h6L3 5z" fill="#ccc" /></svg>
            <span className="ml-[6px] w-[187px] leading-[19px] tracking-[-0.4px]">Edit Geometry</span>
            <div className="mt-[5px] h-[6px] w-[6px] bg-[conic-gradient(#999_25%,transparent_0)] bg-[length:2px_2px]" />
          </div>
        </div>
        <div className="h-[214px] w-[6px] bg-[#333] px-px pt-[64px]"><div className="h-[46px] rounded-full bg-[#5f5f5f]" /></div>
      </div>
    </div>
  );
}

/* ---------- timeline ---------- */

const frames = Array.from({ length: 101 }, (_, i) => i);

function Timeline() {
  return (
    <div className="flex h-[51px] bg-[#444]">
      <div className="ml-[2px] mt-[7px] h-[43px] w-[3px] bg-[conic-gradient(#8a8a8a_25%,transparent_0)] bg-[length:2px_2px]" />
      <div className="ml-[4px] flex-1">
        <div className="flex h-[25px] items-start pl-px pt-[5px] text-[11px] leading-[16px] tracking-[-0.2px] text-[#ddd]">
          <div className="h-[17px] w-[14px] rounded-xs bg-[#616161] text-center">&lt;</div>
          <div className="ml-[2px] h-[17px] w-[123px] rounded-sm bg-[#646464] pr-[2px] text-center leading-[18px]">0 / 100</div>
          <div className="ml-[2px] h-[17px] w-[14px] rounded-xs bg-[#616161] text-center">&gt;</div>
        </div>
        <div className="flex h-[26px] border-t border-black">
          <svg className="h-[25px] w-[50px]" viewBox="9 646 50 25" fill="none">
            <path d="M23 655.500h3.500M23 657.500h3.500M23 659.500h3.500M23 661.500h3.500M23 663.500h3.500" stroke="#ddd" />
            <path d="M28 659c2-6 4-6 5-1 1 7 2 7 4 1" stroke={T} strokeWidth="1.200" />
          </svg>
          <svg className="h-[25px] w-[1271px]" viewBox="59 646 1271 25">
            <rect x="59" y="646" width="1257" height="25" fill="#282828" />
            <rect x="62" y="648" width="7" height="23" fill="#8a7f22" />
            {frames.map((f) => (
              <rect key={f} x={Math.floor(65 + f * 12.450)} y="646" width="1" height={f % 5 === 0 ? 25 : 12} fill={f === 0 ? "#d8cc3a" : "#6a6a6a"} />
            ))}
            <g fontSize="11" fontFamily="Noto Sans, sans-serif" textAnchor="middle" letterSpacing="-0.4">
              {frames.filter((f) => f % 5 === 0).map((f) => (
                <text key={f} x={64.500 + f * 12.450} y="669" fill={f === 0 ? "#d8cc3a" : "#b9b9b9"}>{f}</text>
              ))}
            </g>
          </svg>
        </div>
      </div>
    </div>
  );
}

/* ---------- status bar ---------- */

function Axis({ name }: { name: string }) {
  return (
    <div className="flex h-[17px] w-[84px] items-center">
      <span className="w-[13px]">{name}</span>
      <div className="h-[18px] w-[59px] border border-[#4f4f4f] bg-[#585858]" />
    </div>
  );
}

function StatusBar() {
  return (
    <div className="flex h-[57px] items-start bg-[#444] text-[11px] tracking-[-0.3px] text-[#f0f0f0]">
      <div className="ml-[4px] mt-[5px] w-[98px] font-['Liberation_Mono',monospace] text-[12px] tracking-normal text-[#777]">
        <div className="h-[23px] border-2 border-[#eee] border-l-[#aaa] border-t-[#999] bg-[#dcc3c5]" />
        <div className="h-[24px] overflow-hidden whitespace-nowrap border-2 border-white border-l-[#aaa] border-t-[#999] bg-white pl-[4px] leading-[19px]">
          <div className="w-[87px] overflow-hidden tracking-[-0.1px]">MAXScript Mini</div>
        </div>
      </div>
      <div className="ml-[3px] mt-[4px] h-[51px] w-[3px] border-l border-r border-l-[#666] border-r-[#000]" />
      <div className="ml-[4px] mt-[11px] w-[357px] shrink-0 leading-4">1 Object Selected</div>
      <div className="w-[443px] shrink-0">
        <div className="mt-[10px] flex h-[18px] items-center">
          <svg className="h-[18px] w-[78px]" viewBox="469 681 78 18" fill="none">
            <path d="M471.500 686.500v-3h3M481.500 683.500h3v3M471.500 692.500v3h3M481.500 695.500h3v-3" stroke={L} />
            <rect x="475" y="686" width="6" height="6" fill={T} />
            <path d="M500 688h10v8h-10z" fill={L} />
            <path d="M502 688v-2.500a3 3 0 0 1 6 0V688" stroke={L} strokeWidth="1.800" />
            <path d="M505 690v4" stroke="#444" strokeWidth="2" />
            <path d="M525.500 682.500h13v13h-13z" stroke={L} strokeWidth="1.500" />
            <circle cx="532" cy="689" r="3.500" stroke={L} strokeWidth="2" />
            <path d="M526 689h3M535 689h3M532 683v3M532 692v3" stroke={L} strokeWidth="1.500" />
          </svg>
          <Axis name="X:" />
          <Axis name="Y:" />
          <Axis name="Z:" />
          <span className="ml-[2px]">Grid = 10,0</span>
        </div>
        <div className="mt-[5px] flex h-[21px] items-center pl-[304px]">
          <div className="h-4 w-px bg-black" />
          <div className="ml-[2px] flex h-[21px] w-[22px] items-center justify-center rounded-sm bg-[#5b86be]">
            <svg className="h-[14px] w-[14px]" viewBox="0 0 14 14" fill="none"><path d="M7 .8l5.500 3v6.400L7 13.200l-5.500-3V3.800z" fill="#46618a" stroke="#222" strokeWidth="1.500" /><path d="M7 .8l5.500 3v6.400L7 13.200l-5.500-3V3.800zM1.500 3.800L7 7l5.500-3.200M7 7v6" stroke="#d8dde4" strokeWidth=".9" /></svg>
          </div>
          <span className="ml-[4px] pt-px tracking-[-0.45px] text-[#d0d0d0]">Add Time Tag</span>
        </div>
      </div>
      <svg className="h-[57px] w-[26px] shrink-0" viewBox="912 671 26 57" fill="none">
        <path d="M915.500 684v10" stroke={L} strokeWidth="1.600" />
        <path d="M923 684.500v9l-6-4.500zM929.500 684.500v9l-6-4.500z" fill={L} />
        <path d="M935.500 681v16M935.500 703v16" stroke="#111" />
        <path d="M921 707.500v8l-4.500-4zM923.500 707.500v8l4.500-4z" fill={L} />
      </svg>
      <div className="w-[69px] shrink-0">
        <svg className="block h-[32px] w-[69px]" viewBox="938 671 69 32" fill="none">
          <path d="M947.500 684v10l-6-5zM965 682v15l12-7.500zM994 684v10l6.500-5z" fill={L} />
          <path d="M950 684v10M954 684v10M988 684v10M992 684v10" stroke={L} strokeWidth="1.800" />
          <path d="M982 695v4h-4z" fill="#eee" />
        </svg>
        <div className="flex h-[17px] w-[68px] items-center justify-between border border-[#5a5a5a] bg-[#5f5f5f] pl-[2px] pr-[3px] text-[#ddd]">0<Spin /></div>
      </div>
      <svg className="h-[57px] w-[36px] shrink-0" viewBox="1007 671 36 57" fill="none">
        <path d="M1008.500 681v16M1008.500 703v16" stroke="#111" />
        <path d="M1013 684.500v9l6-4.500zM1019 684.500v9l6-4.500z" fill={L} />
        <path d="M1026 684v10" stroke={L} strokeWidth="1.600" />
        <circle cx="1019" cy="709" r="5" fill={L} />
        <path d="M1019 706v3.500h3" stroke="#333" strokeWidth="1.200" />
        <Gear cx={1023.500} cy={713.500} r={2} />
      </svg>
      <div className="mt-[8px] flex h-[42px] w-[42px] shrink-0 items-center justify-center rounded-xs bg-[#656565]">
        <svg className="h-[34px] w-[34px]" viewBox="0 0 34 34" fill="none">
          <path d="M15.500 3v25M3 15.500h25" stroke="#d8d8d8" strokeWidth="5" />
          <path d="M31 17L20 27.500M24.500 23l3.500 3.500M28 19.500l2.500 2.500" stroke="#444" strokeWidth="4.500" />
          <circle cx="19.500" cy="27.500" r="3.500" stroke={T} strokeWidth="2" fill="#656565" />
          <path d="M31 17L22 25.500M26.500 22l2 2M29 19.500l2 2" stroke={T} strokeWidth="2" />
        </svg>
      </div>
      <div className="ml-[5px] mt-[8px] flex w-[46px] shrink-0 flex-col gap-[2px] text-center leading-[21px] tracking-[-0.2px] text-[#ddd]">
        <div className="h-[20px] whitespace-nowrap bg-[#636363]">Auto Key</div>
        <div className="h-[20px] bg-[#636363]">Set Key</div>
      </div>
      <div className="ml-[5px] mt-[8px] w-[115px] shrink-0">
        <Drop label="Selected" className="h-[20px] w-[115px]" />
        <div className="mt-[2px] flex">
          <svg className="h-[22px] w-[22px]" viewBox="1141 701 22 22" fill="none">
            <path d="M1143 718q5-1 5-10M1159 718q-5-1-5-10" stroke={T} strokeWidth="2.200" />
            <path d="M1145 707h3M1154 707h3" stroke={L} strokeWidth="2" />
            <rect x="1149.500" y="705" width="4" height="4" stroke={L} />
            <path d="M1162 718v4h-4z" fill="#eee" />
          </svg>
          <div className="ml-[4px] mt-px h-[20px] w-[88px] rounded-xs bg-[#636363] text-center leading-[21px] tracking-[0.05px] text-[#ddd]">Key Filters...</div>
        </div>
      </div>
      <svg className="ml-[6px] h-[57px] w-[96px] shrink-0" viewBox="1262 671 96 57" fill="none">
        <circle cx="1277" cy="687.500" r="4.500" stroke={L} strokeWidth="2" />
        <path d="M1273.500 691l-5 5" stroke={L} strokeWidth="2.600" />
        <path d="M1296 682h4v4h-4zM1301 682h4v4h-4zM1296 687h4v4h-4zM1301 687h4v4h-4z" fill={T} />
        <circle cx="1297" cy="690" r="3.500" stroke={L} strokeWidth="1.800" fill="#444" /><path d="M1294.500 692.500l-3 4" stroke={L} strokeWidth="2.200" />
        <path d="M1315 686v-3.500h3.500M1325 682.500h3.500v3.500M1315 692v3.500h3.500" stroke={L} strokeWidth="1.300" />
        <path d="M1321.500 683.500l5 2.500v5l-5 3-5-3v-5z" fill={T} /><path d="M1317 686.500l4.500 2 4.500-2M1321.500 688.500v5" stroke="#357" />
        <path d="M1332 695v4h-4zM1355 695v4h-4z" fill="#eee" />
        <path d="M1345 684l3-2 3 2v9l-3 2-3-2z" fill={T} /><path d="M1338 691l3-2 3 2v3l-3 2-3-2zM1342 686l2-1.500V693l-2-1z" fill={L} />
        <path d="M1271 706l10 5.500-10 6M1276 709v6" stroke={L} strokeWidth="1.900" /><path d="M1285 716v4h-4z" fill="#eee" />
        <path d="M1295 712l-2-1.500 1.200-1.500 2 1.500v-4.500h1.700v4h.7v-5h1.800v5h.7v-4.500h1.700v5h.5v-3h1.500v6c0 3-2 5-4 5h-2.500c-1.500 0-2.800-2-3.600-4z" fill={L} /><path d="M1309 716v4h-4z" fill="#eee" />
        <circle cx="1321" cy="711" r="5" fill={L} /><path d="M1321 706a5 5 0 0 1 5 5h-5z" fill={T} /><ellipse cx="1321.500" cy="712" rx="8" ry="3" transform="rotate(-40 1321.500 712)" stroke={L} strokeWidth="1.400" /><path d="M1332 716v4h-4z" fill="#eee" />
        <path d="M1337.500 705h13.500v13.500h-13.500z" fill={L} /><path d="M1343 712l5.500-5M1344.500 707h4v4" stroke="#333" strokeWidth="1.500" /><path d="M1339 712h5v5h-5z" fill="#444" />
      </svg>
    </div>
  );
}

/* ---------- taskbar ---------- */

function Task({ children, state, className = "w-[62px]" }: Kids & { state?: "open" | "active"; className?: string }) {
  const look = state === "active" ? "border border-[#f3e6d6] bg-[#e8d2b4]/60" : state === "open" ? "border border-[#d9bd98]/80 bg-[#e0c49e]/30" : "";
  return (
    <div className={"flex h-full shrink-0 justify-center " + className}>
      <div className={"flex h-[38px] w-[58px] items-center justify-center " + look}>
        <svg className="h-[32px] w-[34px]" viewBox="0 0 34 32" fill="none">{children}</svg>
      </div>
    </div>
  );
}

function Taskbar() {
  return (
    <div className="relative h-[40px] overflow-hidden">
      <svg className="absolute inset-0 h-[40px] w-[1366px]" viewBox="0 0 1366 40" preserveAspectRatio="none">
        <defs>
          <linearGradient id="wood">
            <stop offset="0" stopColor="#7f4c26" /><stop offset=".03" stopColor="#8b582e" /><stop offset=".12" stopColor="#80522f" />
            <stop offset=".2" stopColor="#85603e" /><stop offset=".3" stopColor="#876043" /><stop offset=".42" stopColor="#94602f" />
            <stop offset=".5" stopColor="#ab773a" /><stop offset=".62" stopColor="#b27b3c" /><stop offset=".78" stopColor="#b28146" />
            <stop offset="1" stopColor="#ad8249" />
          </linearGradient>
          <filter id="grain" x="0" y="0" width="100%" height="100%">
            <feTurbulence type="fractalNoise" baseFrequency="0.090 0.012" numOctaves="3" seed="4" />
            <feColorMatrix values="0 0 0 0 .25  0 0 0 0 .13  0 0 0 0 .04  .9 0 0 0 -.3" />
          </filter>
        </defs>
        <rect width="1366" height="40" fill="url(#wood)" />
        <path d="M190 40Q270 20 400 20T560 40z" fill="#a98152" opacity=".7" />
        <path d="M832 0Q866 34 912 44H940Q990 34 1014 0z" fill="#a8692f" />
        <path d="M856 0Q890 27 925 27 975 24 1003 0z" fill="#955220" />
        <path d="M834 0Q868 34 912 44M940 44Q992 34 1012 0" fill="none" stroke="#8a5626" strokeWidth="1.500" />
        <rect width="1366" height="40" filter="url(#grain)" opacity=".35" />
        <path d="M755 0V40" stroke="#744219" strokeWidth="6" opacity=".75" /><path d="M760 0V40" stroke="#c99656" strokeWidth="2" opacity=".5" />
        <path d="M20 0V40M442 0V40" stroke="#5f3819" strokeWidth="5" opacity=".3" />
      </svg>
      <div className="relative flex h-full items-start pt-px">
        <svg className="ml-[11px] mt-[6px] h-[26px] w-[28px]" viewBox="0 0 28 26" fill="#fff"><path d="M1 4l11-1.500V12H1zM13.500 2.200L27 .5V12H13.500zM1 13.500h11V23L1 21.500zM13.500 13.500H27V25.500l-13.500-1.800z" /></svg>
        <div className="ml-[12px] flex h-full">
          <Task state="open" className="w-[56px]">
            <path d="M2 5h10l2 3h17v20H2z" fill="#e8cf7c" /><path d="M4 3h8v3H4zM14 4h8v3h-8zM23 6h7v3h-7z" fill="#fff" />
            <path d="M6 3h4v2H6z" fill="#2ca52c" /><path d="M14 5h4v2h-4z" fill="#d03c2c" /><path d="M22 7h5v2h-5z" fill="#3b7fd0" />
            <path d="M2 9h29v17H2z" fill="#f6e6a6" stroke="#c8a650" /><path d="M7 31v-9q0-2 2-2h16q2 0 2 2v9h-4v-6H11v6z" fill="#7cc1e8" stroke="#4a90c0" />
          </Task>
          <div className="mr-px h-[38px] w-[4px] border-y border-r border-[#d9bd98]/80 bg-[#e0c49e]/30" />
          <Task>
            <path d="M3 7q6-4 15-2l1 21q-9 4-14 0Q1 17 3 7z" fill="#3f5c80" /><path d="M8 8h8v6H8zM8 17h9v7H8z" fill="#e8571c" />
            <path d="M5 8v17M18 6v20" stroke="#c9d8e8" strokeWidth="1.500" strokeDasharray="2 2" /><path d="M17 27q8 0 8-8t6-13M19 22l12-4" stroke="#e9bb66" strokeWidth="3" /><path d="M21 12q8-2 6 10" stroke="#9db4cc" strokeWidth="2" />
          </Task>
          <Task state="open">
            <path d="M6 3h22l-1 26H5z" fill="#dfeaf6" stroke="#5a87b8" /><path d="M6 3h22v4H6z" fill="#3a77b8" />
            <text x="7" y="20" fontSize="15" fontWeight="700" fontFamily="Liberation Serif, serif" fill="#e8761c">A</text>
            <path d="M20 11h6M20 14h6M20 17h6M8 23h16M8 26h13" stroke="#5d7186" />
          </Task>
          <Task>
            <path d="M26.500 21.500A10.500 10.500 0 1 1 28 17H11" stroke="#2f96d8" strokeWidth="5.500" /><path d="M26.500 21.500A10.500 10.500 0 1 1 28 16H11" stroke="#6fc9f2" strokeWidth="2.500" />
            <path d="M4 30q-6-3 3-14T28 3q5 0 2 7" stroke="#f0bd35" strokeWidth="2.500" />
          </Task>
          <Task state="open">
            <circle cx="17" cy="17" r="14.500" fill="#2da14c" /><path d="M17 17L4.500 9.700A14.500 14.500 0 0 1 29.600 9.700L17 9.700z" fill="#dd4436" />
            <path d="M17 10H29.700A14.500 14.500 0 0 1 17 31.500L23.300 20z" fill="#fcce41" /><path d="M4.500 9.700L10.700 20.500 14 14 17 10z" fill="#dd4436" />
            <circle cx="17" cy="17" r="6.800" fill="#fff" /><circle cx="17" cy="17" r="5.300" fill="#4a86e8" />
          </Task>
          <Task>
            <path d="M18 4h13v24H18z" fill="#fff" stroke="#2b579a" /><path d="M20 9h9M20 12.500h9M20 16h9M20 19.500h9M20 23h9" stroke="#2b579a" strokeWidth="1.500" />
            <path d="M2 4L20 1v30L2 28z" fill="#2b579a" /><text x="4.500" y="21" fontSize="13" fontWeight="700" fontFamily="Open Sans, sans-serif" fill="#fff">W</text>
          </Task>
          <Task>
            <rect x="2" y="1.500" width="30" height="30" rx="3" fill="#d8402a" stroke="#f3d2c8" /><circle cx="17" cy="16.500" r="10" stroke="#fff" strokeWidth="2" /><path d="M17 11v11" stroke="#fff" strokeWidth="2.200" />
          </Task>
          <Task>
            <path d="M17 9h15v14H17z" fill="#fff" stroke="#0a6ebd" /><path d="M18 9.500l7.500 7 6.500-7" stroke="#0a6ebd" strokeWidth="2" />
            <path d="M2 4L20 1v30L2 28z" fill="#0a6ebd" /><text x="5" y="21" fontSize="14" fontWeight="700" fontFamily="Open Sans, sans-serif" fill="#fff">O</text>
          </Task>
          <Task state="open">
            <rect x="5" y="6" width="24" height="20" fill="#9cc8ea" stroke="#fff" strokeWidth="1.500" /><path d="M6 15q8-6 13 0l9 1v3H6z" fill="#4c7d45" /><path d="M6 19h22v6H6z" fill="#7db4d8" />
            <path d="M3.500 9V4.500H9M25 4.500h5.500V9M3.500 22v5.500H9M30.500 22v5.500H25" stroke="#2f6fb5" strokeWidth="3" />
          </Task>
          <Task state="active">
            <rect x="1" y="0" width="32" height="32" fill="#e3f2f0" /><path d="M11 6.500c6-5 13 .5 6.500 6.500 7.500 2 3.500 11-7.500 7.500" stroke="#1a9490" strokeWidth="4.500" />
            <text x="18" y="30" fontSize="5.500" fontWeight="700" fontFamily="Open Sans, sans-serif" fill="#14807f">MAX</text>
          </Task>
        </div>
        <svg className="ml-auto mt-[11px] h-[18px] w-[92px] shrink-0" viewBox="1150 740 92 18" fill="#fff">
          <path d="M1150.500 752h8l-4-4.500z" />
          <path d="M1175.500 742.500l4 2.500-4 2.500-4-2.500zM1182.500 742.500l4 2.500-4 2.500-4-2.500zM1175.500 747.500l4 2.500-4 2.500-4-2.500zM1182.500 747.500l4 2.500-4 2.500-4-2.500zM1179 751.500l3.500 2.200-3.500 2-3.500-2z" />
          <path d="M1204 743.500h7v11.500h-7z" fill="none" stroke="#fff" strokeWidth="1.500" /><path d="M1206 741h3v2h-3zM1196 743h1.500v3h2V743h1.500v3h1v4h-2.500v6h-1.500v-6h-2.500v-4h1z" />
          <path d="M1220 752h2v3h-2zM1223 750h2v5h-2zM1226 748h2v7h-2zM1229 745.500h2v9.500h-2zM1232 743h2.500v12h-2.500z" />
        </svg>
        <span className="ml-[10px] w-[34px] text-[11.500px] leading-[38px] text-white">ITA</span>
        <div className="mr-[17px] mt-[3px] w-[63px] whitespace-nowrap text-center text-[11.500px] leading-[17px] tracking-[-0.38px] text-white">
          <div>11:18</div>
          <div>08/02/2018</div>
        </div>
      </div>
    </div>
  );
}

export default function App() {
  return (
    <div className="flex h-[768px] w-[1366px] flex-col overflow-hidden bg-[#444] font-['Noto_Sans','Open_Sans',sans-serif]">
      <TitleBar />
      <MenuBar />
      <Toolbar />
      <Ribbon />
      <div className="h-[6px] shrink-0" />
      <div className="flex h-[495px] shrink-0">
        <LeftStrip />
        <div className="flex w-[938px] flex-col gap-[5px]">
          <div className="flex gap-[4px]"><TopView /><FrontView /></div>
          <div className="flex gap-[4px]"><LeftView /><PerspectiveView /></div>
        </div>
        <CommandPanel />
      </div>
      <Timeline />
      <StatusBar />
      <Taskbar />
    </div>
  );
}
